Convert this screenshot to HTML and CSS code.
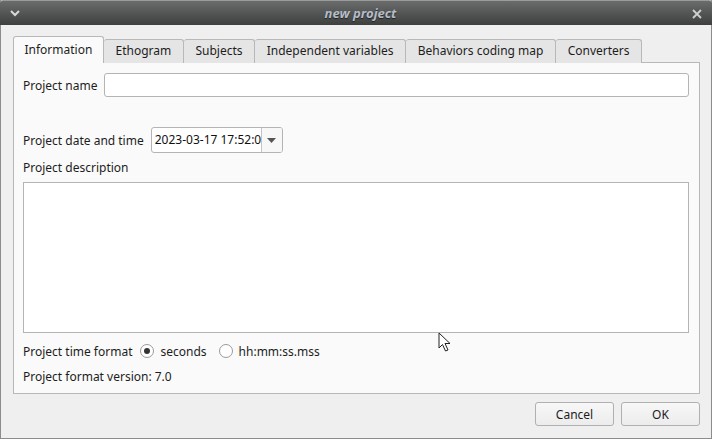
FILE: index.html
```html
<!DOCTYPE html>
<html lang="en">
<head>
  <meta charset="UTF-8">
  <title>new project</title>
  <link rel="stylesheet" href="styles.css">
</head>
<body>
<div class="window">
  <div class="titlebar">
    <svg class="tb-menu" width="12" height="8" viewBox="0 0 12 8"><path d="M2 2 L6 6 L10 2" fill="none" stroke="#d8d8d8" stroke-width="2"/></svg>
    <span class="tb-title">new project</span>
    <svg class="tb-close" width="10" height="10" viewBox="0 0 10 10"><path d="M1 1 L9 9 M9 1 L1 9" stroke="#cfcfcf" stroke-width="1.8"/></svg>
  </div>
  <div class="content">
    <div class="tabs">
      <div class="tab active">Information</div>
      <div class="tab">Ethogram</div>
      <div class="tab">Subjects</div>
      <div class="tab">Independent variables</div>
      <div class="tab">Behaviors coding map</div>
      <div class="tab">Converters</div>
    </div>
    <div class="pane">
      <div class="row name-row">
        <label>Project name</label>
        <div class="line-edit"></div>
      </div>
      <div class="row date-row">
        <label>Project date and time</label>
        <div class="datetime">
          <span class="dt-text">2023-03-17 17:52:0</span>
          <span class="dt-arrow"><svg width="9" height="5" viewBox="0 0 9 5"><path d="M0 0 L9 0 L4.5 5 Z" fill="#555"/></svg></span>
        </div>
      </div>
      <div class="desc-label">Project description</div>
      <div class="text-edit"></div>
      <div class="row time-row">
        <label>Project time format</label>
        <span class="radio checked"></span><span class="radio-text">seconds</span>
        <span class="radio"></span><span class="radio-text">hh:mm:ss.mss</span>
      </div>
      <div class="version">Project format version: 7.0</div>
    </div>
    <div class="buttons">
      <button class="btn">Cancel</button>
      <button class="btn">OK</button>
    </div>
  </div>
  <svg class="cursor" width="14" height="21" viewBox="0 0 14 21"><path d="M1 1 L1 16 L4.5 12.5 L7.5 19 L10 18 L7 11.5 L12 11.5 Z" fill="#fff" stroke="#222" stroke-width="1"/></svg>
</div>
</body>
</html>
```

FILE: styles.css
```css
html, body {
  margin: 0;
  padding: 0;
}
body {
  width: 712px;
  height: 439px;
  overflow: hidden;
  font-family: 'Noto Sans', 'DejaVu Sans', sans-serif;
  font-size: 12px;
  color: #1d1d1d;
  background: #efefef;
}
.window {
  position: relative;
  width: 712px;
  height: 439px;
  box-sizing: border-box;
  display: flex;
  flex-direction: column;
  background: #efefef;
  border: 1px solid #8c8c8c;
  border-top: none;
}
.titlebar {
  height: 25px;
  margin: 0 -1px;
  display: flex;
  align-items: center;
  justify-content: space-between;
  padding: 0 10px 0 9px;
  background: linear-gradient(#6a6c6c, #3e4040);
  border-top: 1px solid #9a9c9c;
  border-radius: 3px 3px 0 0;
  box-sizing: border-box;
}
.tb-title {
  font-style: italic;
  font-weight: bold;
  font-size: 13px;
  color: #b4bcc8;
  text-shadow: 0 1px 1px #222;
  margin-left: 8px;
}
.tb-close {
  margin-top: 1px;
}
.content {
  flex: 1;
  display: flex;
  flex-direction: column;
  padding: 12px 11px 0 12px;
}
.tabs {
  display: flex;
  align-items: flex-end;
  height: 26px;
  position: relative;
  z-index: 1;
  margin-bottom: -1px;
}
.tab {
  height: 24px;
  line-height: 22px;
  padding: 0 11.6px;
  background: #e5e5e5;
  border: 1px solid #b8b8b8;
  border-bottom: none;
  border-left: none;
  border-radius: 3px 3px 0 0;
  box-sizing: border-box;
}
.tab.active {
  height: 27px;
  line-height: 25px;
  background: #fafafa;
  border-left: 1px solid #b8b8b8;
  padding: 0 10.5px;
}
.pane {
  height: 332px;
  box-sizing: border-box;
  background: #fafafa;
  border: 1px solid #b8b8b8;
  padding: 10px 10px 0 9px;
  display: flex;
  flex-direction: column;
}
.row {
  display: flex;
  align-items: center;
}
.line-edit {
  flex: 1;
  height: 24px;
  margin-left: 7px;
  box-sizing: border-box;
  background: #fff;
  border: 1px solid #b4b4b4;
  border-radius: 3px;
}
.date-row {
  margin-top: 30px;
}
.datetime {
  display: flex;
  align-items: stretch;
  height: 26px;
  width: 132px;
  margin-left: 7px;
  box-sizing: border-box;
  background: #fff;
  border: 1px solid #b4b4b4;
  border-radius: 3px;
  overflow: hidden;
}
.dt-text {
  flex: 1;
  line-height: 24px;
  padding-left: 3px;
  overflow: hidden;
  white-space: nowrap;
  color: #111;
}
.dt-arrow {
  width: 20px;
  flex: none;
  border-left: 1px solid #c4c4c4;
  background: #f7f7f7;
  display: flex;
  align-items: center;
  justify-content: center;
}
.desc-label {
  margin-top: 6px;
  line-height: 18px;
}
.text-edit {
  height: 151px;
  margin-top: 5px;
  box-sizing: border-box;
  background: #fff;
  border: 1px solid #b4b4b4;
}
.time-row {
  margin-top: 9px;
  height: 18px;
}
.radio {
  width: 14px;
  height: 14px;
  box-sizing: border-box;
  border: 1px solid #9a9a9a;
  border-radius: 50%;
  background: #fff;
  margin: 0 6px 0 8px;
  position: relative;
}
.radio.checked::after {
  content: "";
  position: absolute;
  left: 3px;
  top: 3px;
  width: 6px;
  height: 6px;
  border-radius: 50%;
  background: #333;
}
.radio-text + .radio {
  margin-left: 12px;
}
.version {
  margin-top: 8px;
  line-height: 18px;
}
.buttons {
  display: flex;
  justify-content: flex-end;
  gap: 7px;
  margin-top: 8px;
}
.btn {
  width: 79px;
  height: 24px;
  font-family: inherit;
  font-size: 12px;
  color: #1d1d1d;
  background: linear-gradient(#f7f7f7, #ececec);
  border: 1px solid #b0b0b0;
  border-radius: 3px;
  padding: 0;
}
.cursor {
  position: absolute;
  left: 437px;
  top: 332px;
}
```
